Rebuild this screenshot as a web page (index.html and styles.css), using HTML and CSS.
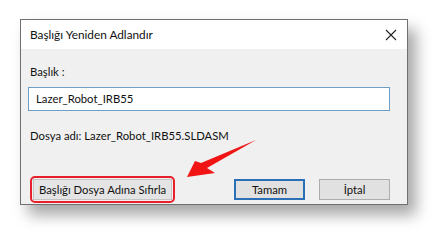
FILE: index.html
```html
<!DOCTYPE html>
<html lang="tr">
<head>
<meta charset="utf-8">
<link rel="stylesheet" href="styles.css">
</head>
<body>
<div class="dialog">
  <div class="titlebar">
    <span class="title">Başlığı Yeniden Adlandır</span>
    <svg class="close" width="12" height="12" viewBox="0 0 12 12"><path d="M1 1L11 11M11 1L1 11" stroke="#222" stroke-width="1.1" fill="none"/></svg>
  </div>
  <div class="content">
    <div class="label">Başlık :</div>
    <div class="input">Lazer_Robot_IRB55</div>
    <div class="filename">Dosya adı: Lazer_Robot_IRB55.SLDASM</div>
    <div class="buttons">
      <div class="highlight"><div class="btn reset">Başlığı Dosya Adına Sıfırla</div></div>
      <div class="right">
        <div class="btn ok">Tamam</div>
        <div class="btn">İptal</div>
      </div>
    </div>
  </div>
</div>
<svg class="arrow" width="90" height="50" viewBox="0 0 90 50">
  <path d="M1 44 L9 28 L15 30 L70 7 L21 35 L29 40 Z" fill="#f01414"/>
</svg>
</body>
</html>
```
FILE: styles.css
```css
html, body {
  margin: 0;
  padding: 0;
  background: #fff;
  font-family: "Lato", "Noto Sans", sans-serif;
  font-size: 11.3px;
  color: #111;
}
body {
  width: 448px;
  height: 243px;
  overflow: hidden;
  position: relative;
}
.dialog {
  margin: 19px 0 0 20px;
  width: 386px;
  height: 184px;
  border: 1px solid #707070;
  background: #f0f0f0;
  box-shadow: 8px 10px 14px rgba(0,0,0,0.35);
  display: flex;
  flex-direction: column;
}
.titlebar {
  height: 29px;
  background: #fff;
  display: flex;
  align-items: center;
  justify-content: space-between;
  padding: 0 10px 0 9px;
}
.title { font-size: 11.8px; }
.content {
  flex: 1;
  display: flex;
  flex-direction: column;
  padding: 15px 17px 0 7px;
}
.label { height: 16px; line-height: 16px; margin-left: 2px; }
.input {
  margin-top: 7px;
  height: 22px;
  border: 1px solid #6c9ec8;
  background: #fff;
  line-height: 22px;
  padding-left: 7px;
}
.filename { margin-top: 17px; margin-left: 2px; line-height: 16px; }
.buttons {
  margin-top: 32px;
  display: flex;
  justify-content: space-between;
  align-items: center;
}
.highlight {
  border: 2px solid #e8202a;
  border-radius: 5px;
  padding: 1px;
  margin-left: 2px;
}
.btn {
  height: 19px;
  line-height: 19px;
  border: 1px solid #adadad;
  background: #e1e1e1;
  text-align: center;
  width: 69px;
}
.reset { width: auto; padding: 0 5px; border-color: #c4c4c4; background: #e4e4e4; }
.right { display: flex; gap: 14px; }
.ok { border: 2px solid #2b6fb6; height: 17px; line-height: 17px; width: 67px; }
.arrow {
  position: absolute;
  left: 186px;
  top: 133px;
}
```
